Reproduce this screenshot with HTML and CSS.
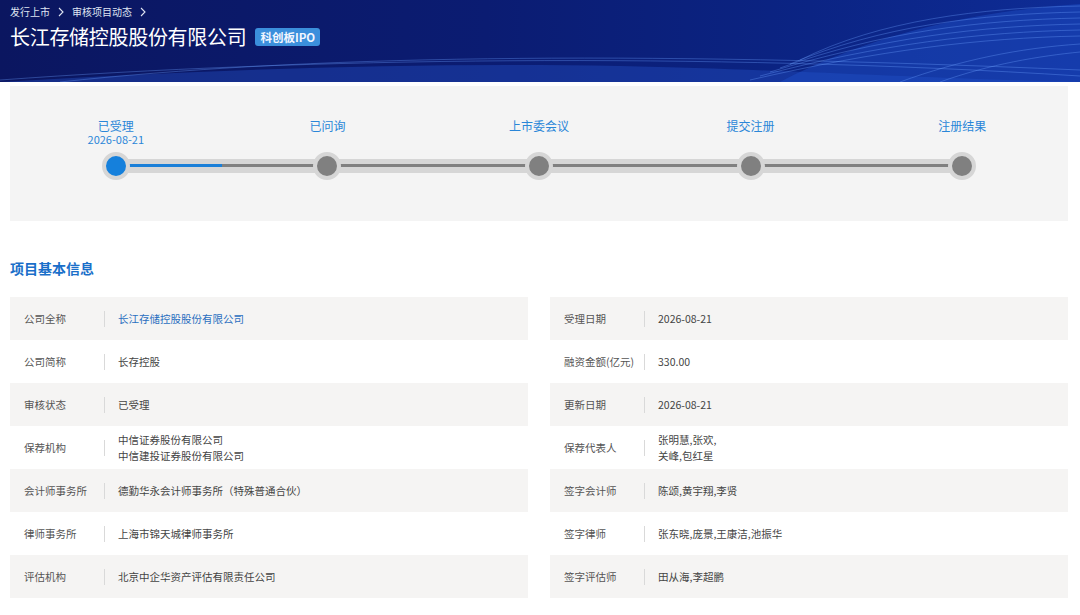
FILE: index.html
```html
<!DOCTYPE html>
<html lang="zh-CN">

<head>
    <meta charset="UTF-8">
    <meta name="viewport" content="width=device-width, initial-scale=1.0">
    <title>长江存储控股股份有限公司 - 审核项目动态</title>
    <link rel="stylesheet" href="styles.css">
</head>

<body>
    <header class="header">
        <svg class="header-waves" viewBox="0 0 1080 82" preserveAspectRatio="none">
            <path d="M0 82 C 200 70, 420 62, 620 66 C 800 70, 900 78, 1080 82 Z" fill="rgba(40,90,210,0.35)"/>
            <path d="M780 82 C 860 40, 960 12, 1080 4 L1080 82 Z" fill="rgba(30,80,200,0.45)"/>
            <g fill="none" stroke="rgba(110,160,255,0.35)" stroke-width="1">
                <path d="M800 60 C 880 20, 980 8, 1080 6"/>
                <path d="M790 64 C 880 26, 980 14, 1080 12"/>
                <path d="M780 68 C 880 32, 980 20, 1080 18"/>
                <path d="M770 72 C 880 38, 980 26, 1080 24"/>
                <path d="M760 76 C 880 44, 980 32, 1080 30"/>
                <path d="M750 80 C 880 50, 980 38, 1080 36"/>
                <path d="M60 82 C 300 56, 620 50, 1080 70"/>
                <path d="M0 80 C 300 58, 700 52, 1080 76"/>
                <path d="M900 82 C 960 60, 1020 48, 1080 44"/>
                <path d="M940 82 C 990 64, 1040 56, 1080 52"/>
            </g>
        </svg>
        <div class="header-inner">
            <nav class="breadcrumb">
                <span>发行上市</span>
                <svg class="chevron" viewBox="0 0 6 10"><path d="M1 1 L5 5 L1 9" fill="none" stroke="currentColor" stroke-width="1.1"/></svg>
                <span>审核项目动态</span>
                <svg class="chevron" viewBox="0 0 6 10"><path d="M1 1 L5 5 L1 9" fill="none" stroke="currentColor" stroke-width="1.1"/></svg>
            </nav>
            <div class="title-row">
                <h1>长江存储控股股份有限公司</h1>
                <span class="badge">科创板IPO</span>
            </div>
        </div>
    </header>

    <main class="content">
        <section class="progress">
            <div class="steps">
                <div class="track"><div class="track-fill"></div></div>
                <div class="step active">
                    <div class="step-label">已受理<span class="step-date">2026-08-21</span></div>
                    <div class="node"></div>
                </div>
                <div class="step">
                    <div class="step-label">已问询</div>
                    <div class="node"></div>
                </div>
                <div class="step">
                    <div class="step-label">上市委会议</div>
                    <div class="node"></div>
                </div>
                <div class="step">
                    <div class="step-label">提交注册</div>
                    <div class="node"></div>
                </div>
                <div class="step">
                    <div class="step-label">注册结果</div>
                    <div class="node"></div>
                </div>
            </div>
        </section>

        <h2 class="section-title">项目基本信息</h2>

        <div class="info-grid">
            <div class="cell"><span class="label">公司全称</span><span class="value link">长江存储控股股份有限公司</span></div>
            <div class="cell"><span class="label">受理日期</span><span class="value">2026-08-21</span></div>

            <div class="cell"><span class="label">公司简称</span><span class="value">长存控股</span></div>
            <div class="cell"><span class="label">融资金额(亿元)</span><span class="value">330.00</span></div>

            <div class="cell"><span class="label">审核状态</span><span class="value">已受理</span></div>
            <div class="cell"><span class="label">更新日期</span><span class="value">2026-08-21</span></div>

            <div class="cell"><span class="label">保荐机构</span><span class="value">中信证券股份有限公司<br>中信建投证券股份有限公司</span></div>
            <div class="cell"><span class="label">保荐代表人</span><span class="value">张明慧,张欢,<br>关峰,包红星</span></div>

            <div class="cell"><span class="label">会计师事务所</span><span class="value">德勤华永会计师事务所（特殊普通合伙）</span></div>
            <div class="cell"><span class="label">签字会计师</span><span class="value">陈颂,黄宇翔,李贤</span></div>

            <div class="cell"><span class="label">律师事务所</span><span class="value">上海市锦天城律师事务所</span></div>
            <div class="cell"><span class="label">签字律师</span><span class="value">张东晓,庞景,王康洁,池振华</span></div>

            <div class="cell"><span class="label">评估机构</span><span class="value">北京中企华资产评估有限责任公司</span></div>
            <div class="cell"><span class="label">签字评估师</span><span class="value">田从海,李超鹏</span></div>
        </div>
    </main>
</body>

</html>
```

FILE: styles.css
```css
body {
    margin: 0;
    padding: 0;
    background-color: #fff;
    font-family: "Noto Sans CJK SC", "Noto Sans", sans-serif;
    color: #444;
}

.header {
    position: relative;
    height: 82px;
    overflow: hidden;
    background: linear-gradient(90deg, #0b1660 0%, #0b1c72 45%, #0b2484 75%, #0e2c96 100%);
    color: #fff;
}

.header-waves {
    position: absolute;
    left: 0;
    top: 0;
    width: 100%;
    height: 100%;
}

.header-inner {
    position: relative;
    padding: 4px 10px 0;
}

.breadcrumb {
    display: flex;
    align-items: center;
    gap: 8px;
    font-size: 10px;
    line-height: 16px;
    color: #dfe4f2;
}

.chevron {
    width: 6px;
    height: 10px;
}

.title-row {
    display: flex;
    align-items: center;
    gap: 9px;
    margin-top: 3px;
}

.title-row h1 {
    margin: 0;
    font-size: 20px;
    font-weight: normal;
    line-height: 28px;
    letter-spacing: -0.3px;
}

.badge {
    padding: 0 5px;
    height: 18px;
    line-height: 18px;
    font-size: 11.5px;
    font-weight: bold;
    background-color: #3b8fdc;
    border-radius: 3px;
    color: #f2f6ff;
}

.content {
    padding: 4px 12px 0 10px;
}

.progress {
    background-color: #f4f4f4;
    padding: 33px 0 41px;
}

.steps {
    position: relative;
    display: grid;
    grid-template-columns: repeat(5, 1fr);
}

.track {
    position: absolute;
    left: 10%;
    right: 10%;
    bottom: 7px;
    height: 14px;
    background-color: #d6d6d6;
}

.track::before {
    content: "";
    position: absolute;
    left: 0;
    right: 0;
    top: 5px;
    height: 3px;
    background-color: #808080;
}

.track-fill {
    position: absolute;
    left: 0;
    top: 5px;
    width: 12.5%;
    height: 3px;
    background-color: #1a7fd8;
}

.step {
    position: relative;
    display: flex;
    flex-direction: column;
    align-items: center;
}

.step-label {
    height: 33px;
    font-size: 12px;
    line-height: 14px;
    text-align: center;
    color: #2a86d8;
}

.step-date {
    display: block;
    font-size: 11px;
    line-height: 13px;
}

.node {
    width: 20px;
    height: 20px;
    border-radius: 50%;
    background-color: #808080;
    border: 4px solid #d6d6d6;
}

.step.active .node {
    background-color: #1580dc;
}

.section-title {
    margin: 37px 0 19px;
    font-size: 14px;
    line-height: 20px;
    color: #1a6fc9;
}

.info-grid {
    display: grid;
    grid-template-columns: 1fr 1fr;
    column-gap: 22px;
}

.cell {
    display: flex;
    align-items: center;
    height: 43px;
    font-size: 10.5px;
}

.cell:nth-child(4n+1),
.cell:nth-child(4n+2) {
    background-color: #f5f4f3;
}

.label {
    position: relative;
    width: 81px;
    padding-left: 14px;
    color: #555;
    white-space: nowrap;
}

.label::after {
    content: "";
    position: absolute;
    right: 0;
    top: 50%;
    margin-top: -8px;
    width: 1px;
    height: 16px;
    background-color: #d9d9d9;
}

.value {
    padding-left: 13px;
    line-height: 16px;
    color: #444;
}

.value.link {
    color: #2a6fc0;
}
```
